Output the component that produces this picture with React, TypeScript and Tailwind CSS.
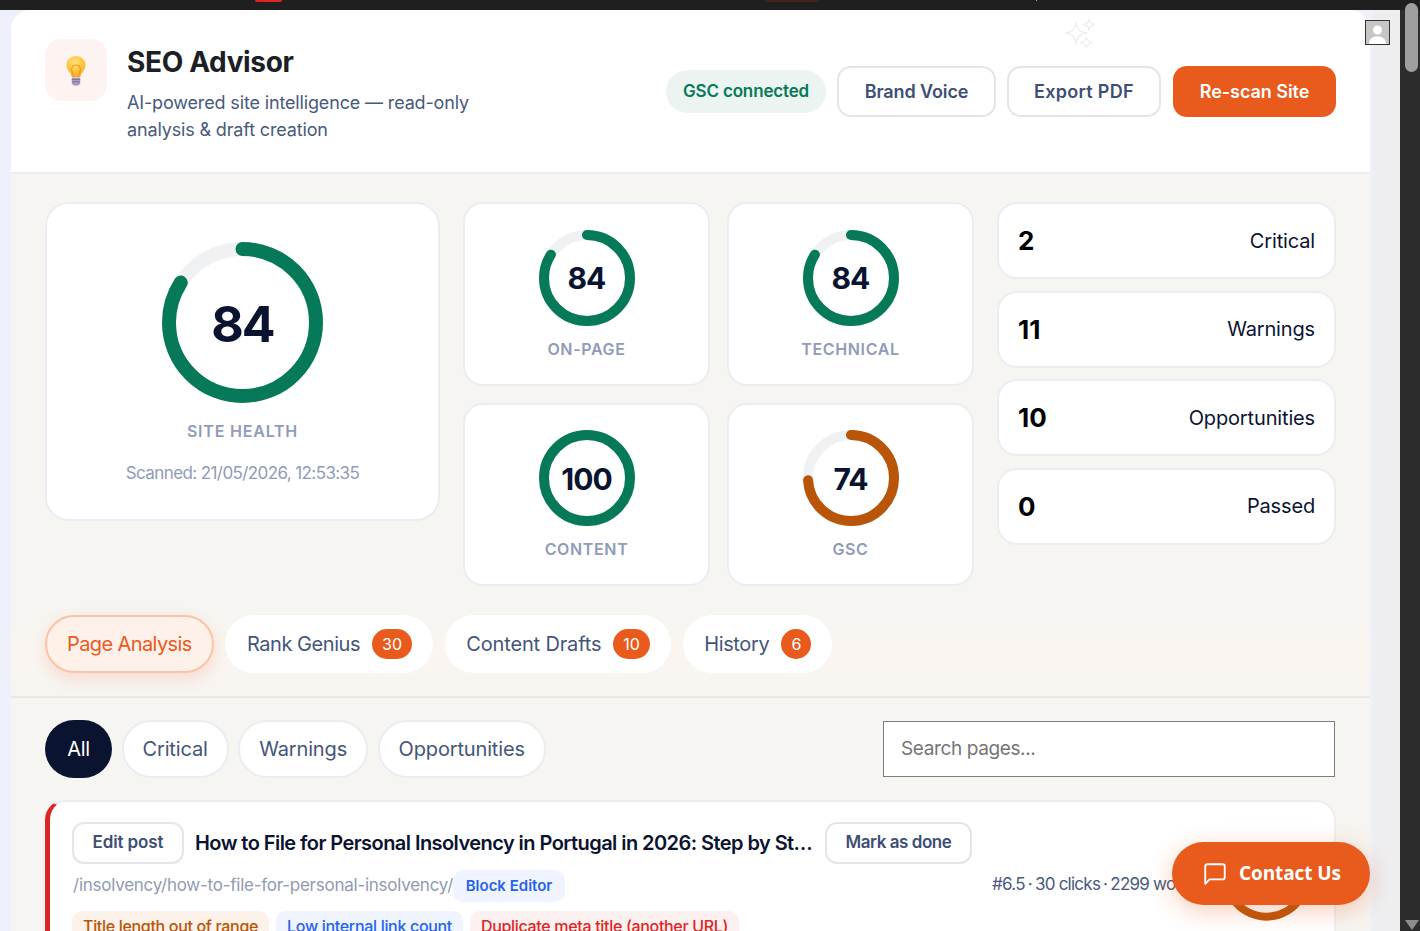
import React from 'react';

// Score ring, drawn from the top going clockwise
function Ring({ value, size, stroke, color }: { value: number; size: number; stroke: number; color: string }) {
    const r = (size - stroke) / 2;
    const c = 2 * Math.PI * r;
    return (
        <svg width={size} height={size} className="absolute inset-0 -rotate-90">
            <circle cx={size / 2} cy={size / 2} r={r} fill="none" stroke="#f0f1f3" strokeWidth={stroke} />
            <circle
                cx={size / 2}
                cy={size / 2}
                r={r}
                fill="none"
                stroke={color}
                strokeWidth={stroke}
                strokeLinecap={value < 100 ? 'round' : 'butt'}
                strokeDasharray={`${(c * value) / 100} ${c}`}
            />
        </svg>
    );
}

function ScoreCard({ value, label, pad, color = '#067a58' }: { value: number; label: string; pad: string; color?: string }) {
    return (
        <div className={`flex h-[183.5px] w-[247px] flex-col items-center rounded-[20px] border-2 border-[#ecedf1] bg-white ${pad}`}>
            <div className="relative flex h-[96px] w-[96px] items-center justify-center">
                <Ring value={value} size={96} stroke={10} color={color} />
                <span className="pt-[2px] text-[30px] font-bold tracking-[-1px] text-[#0a1330]">{value}</span>
            </div>
            <div className="mt-[13px] text-[16px] leading-[20px] font-semibold tracking-[0.65px] text-[#8f9bb8]">{label}</div>
        </div>
    );
}

function StatCard({ value, label }: { value: number; label: string }) {
    return (
        <div className="flex h-[77px] items-center justify-between rounded-[20px] border-2 border-[#ecedf1] bg-white pr-[19px] pl-[19px]">
            <span className="text-[26px] font-bold text-black">{value}</span>
            <span className="text-[20px] tracking-[-0.15px] text-[#0a1330]">{label}</span>
        </div>
    );
}

function Tab({ label, count, tracking }: { label: string; count: number; tracking: string }) {
    return (
        <div className="flex h-[58px] items-center gap-[12px] rounded-full bg-white pr-[21px] pl-[21.5px] text-[20px] text-[#44557a]">
            <span className={tracking}>{label}</span>
            <span className="flex h-[30px] min-w-[29px] items-center justify-center rounded-full bg-[#e95a1d] px-[10px] text-[16px] text-white">
                {count}
            </span>
        </div>
    );
}

function Filter({ label }: { label: string }) {
    return (
        <div className="flex h-[58px] items-center rounded-full border-2 border-[#ecedf1] bg-white px-[19px] text-[20px] tracking-[-0.15px] text-[#44557a]">
            {label}
        </div>
    );
}

function Issue({ label, className }: { label: string; className: string }) {
    return <span className={`flex h-[32px] items-center rounded-[10px] px-[11px] pb-[2px] text-[16px] font-medium tracking-[-0.32px] ${className}`}>{label}</span>;
}

export default function App() {
    return (
        <div className="relative flex h-[931px] w-[1420px] flex-col overflow-hidden bg-[#1f1f1f] font-['Inter',sans-serif]">
            {/* Browser strip above the page */}
            <div className="h-[10px] shrink-0 bg-[#1f1f1f]" />
            <div className="absolute top-0 left-[255px] h-[2px] w-[27px] rounded-b-full bg-[#e02424]" />
            <div className="absolute top-0 left-[765px] h-[2px] w-[54px] rounded-b-full bg-[#46241a]" />
            <div className="absolute top-0 left-[1036px] h-[1px] w-[1px] bg-[#c9a94f]" />

            <div className="flex min-h-0 flex-1">
                <div className="flex min-w-0 flex-1 bg-[#eef1fb]">
                    <main className="ml-[11px] w-[1359px] shrink-0 overflow-hidden rounded-t-[20px] bg-[#f6f5f1]">
                        {/* Header */}
                        <header className="flex h-[164px] items-start justify-between border-b-2 border-[#ecedf1] bg-white pr-[34px] pl-[34px]">
                            <div className="flex gap-[20px] pt-[29px]">
                                <div className="flex h-[62px] w-[62px] items-center justify-center rounded-[16px] bg-[#fdf3f0]">
                                    <svg width="22" height="32" viewBox="0 0 22 32" className="mt-[1px]">
                                        <defs>
                                            <radialGradient id="bulb" cx="0.45" cy="0.3" r="0.75">
                                                <stop offset="0" stopColor="#ffe27a" />
                                                <stop offset="0.6" stopColor="#fdc33a" />
                                                <stop offset="1" stopColor="#f5a524" />
                                            </radialGradient>
                                        </defs>
                                        <path d="M11 1C5.6 1 1.5 5 1.5 10c0 3.4 1.8 5.6 3.4 7.8 1 1.4 1.6 2.8 1.8 4.2h8.6c.2-1.4.8-2.8 1.8-4.2 1.6-2.2 3.4-4.4 3.4-7.8C20.500 5 16.400 1 11 1z" fill="url(#bulb)" />
                                        <path d="M8.500 21.500c-.4-3.500-1.800-4.500-1.800-7.200a4.300 4.300 0 0 1 8.600 0c0 2.700-1.400 3.700-1.800 7.200" fill="none" stroke="#eb9a25" strokeWidth="1.200" />
                                        <path d="M6.800 22.500h8.400v5.500c0 1.500-1.800 2.700-4.200 2.700s-4.200-1.200-4.200-2.700z" fill="#a99bc0" />
                                        <path d="M6.800 24.500h8.400M6.800 26.800h8.400" stroke="#7e6f99" strokeWidth="0.900" />
                                    </svg>
                                </div>
                                <div className="w-[350px]">
                                    <h1 className="pt-[3px] text-[28px] leading-[40px] font-bold tracking-[-0.35px] text-[#1a2026]">SEO Advisor</h1>
                                    <p className="mt-[7px] text-[18px] leading-[27px] tracking-[-0.15px] text-[#475a7d]">
                                        AI-powered site intelligence — read-only analysis &amp; draft creation
                                    </p>
                                </div>
                            </div>
                            <div className="flex items-center pt-[56px]">
                                <div className="flex h-[43px] w-[160px] items-center justify-center rounded-full bg-[#ebf4f1] text-[17px] font-semibold tracking-[-0.15px] text-[#067a58]">
                                    GSC connected
                                </div>
                                <div className="ml-[11px] flex h-[51px] w-[159px] items-center justify-center rounded-[14px] border-2 border-[#e4e5ea] bg-white text-[18px] font-semibold tracking-[-0.1px] text-[#3d4f75]">
                                    Brand Voice
                                </div>
                                <div className="ml-[11px] flex h-[51px] w-[154px] items-center justify-center rounded-[14px] border-2 border-[#e4e5ea] bg-white text-[18px] font-semibold tracking-[0.3px] text-[#3d4f75]">
                                    Export PDF
                                </div>
                                <div className="ml-[12px] flex h-[51px] w-[163px] items-center justify-center rounded-[14px] bg-[#e95a1d] text-[18px] font-semibold tracking-[-0.05px] text-white">
                                    Re-scan Site
                                </div>
                            </div>
                        </header>

                        {/* Scores */}
                        <section className="flex items-start px-[34px] pt-[28px]">
                            <div className="flex h-[319px] w-[395px] shrink-0 flex-col items-center rounded-[24px] border-2 border-[#ecedf1] bg-white pt-[38px]">
                                <div className="relative flex h-[161px] w-[161px] items-center justify-center">
                                    <Ring value={84} size={161} stroke={14} color="#067a58" />
                                    <span className="pt-[4px] text-[50px] font-bold tracking-[-2px] text-[#0a1330]">84</span>
                                </div>
                                <div className="mt-[17px] text-[16px] leading-[22px] font-semibold tracking-[0.8px] text-[#8f9bb8]">SITE HEALTH</div>
                                <div className="mt-[19px] text-[17px] leading-[24px] tracking-[-0.6px] text-[#8f9bb8]">Scanned: 21/05/2026, 12:53:35</div>
                            </div>
                            <div className="ml-[23px] grid shrink-0 grid-cols-[247px_247px] gap-[17px]">
                                <ScoreCard value={84} label="ON-PAGE" pad="pt-[25.5px]" />
                                <ScoreCard value={84} label="TECHNICAL" pad="pt-[25.5px]" />
                                <ScoreCard value={100} label="CONTENT" pad="pt-[25.5px]" />
                                <ScoreCard value={74} label="GSC" color="#b85508" pad="pt-[25.5px]" />
                            </div>
                            <div className="ml-[23px] flex w-[339px] shrink-0 flex-col gap-[11.67px]">
                                <StatCard value={2} label="Critical" />
                                <StatCard value={11} label="Warnings" />
                                <StatCard value={10} label="Opportunities" />
                                <StatCard value={0} label="Passed" />
                            </div>
                        </section>

                        {/* Tabs */}
                        <nav className="mt-[29px] flex h-[83px] gap-[11.7px] border-b-2 border-[#e9e7e2] bg-gradient-to-b from-[#f6f5f1] via-[#fbf5f0] to-[#f6f5f1] px-[34px]">
                            <div className="flex h-[58px] items-center rounded-full border-2 border-[#fdc3a4] bg-[#fdf1ea] px-[20px] text-[20px] tracking-[-0.6px] text-[#e95a1d] shadow-[0_6px_16px_rgba(233,90,29,0.16)]">
                                Page Analysis
                            </div>
                            <Tab label="Rank Genius" count={30} tracking="tracking-[-0.45px]" />
                            <Tab label="Content Drafts" count={10} tracking="tracking-[-0.15px]" />
                            <Tab label="History" count={6} tracking="tracking-[-0.35px]" />
                        </nav>

                        {/* Filters */}
                        <div className="flex items-center justify-between pt-[22px] pr-[35px] pl-[34px]">
                            <div className="flex gap-[9.5px]">
                                <div className="flex h-[58px] w-[67px] items-center justify-center rounded-full bg-[#0a1330] text-[20px] tracking-[-0.4px] text-white">All</div>
                                <Filter label="Critical" />
                                <Filter label="Warnings" />
                                <Filter label="Opportunities" />
                            </div>
                            <div className="flex h-[56px] w-[452px] items-center border border-[#7d7d7d] bg-white px-[17px] pt-[1px] text-[19px] tracking-[-0.38px] text-[#757575]">
                                Search pages...
                            </div>
                        </div>

                        {/* First page result */}
                        <article className="relative mx-[34px] mt-[22px] h-[200px] overflow-hidden rounded-[20px] border-t-2 border-r-2 border-l-[5px] border-[#ecedf1] border-l-[#dc2626] bg-white pt-[20px] pl-[22px]">
                            <div className="flex items-center">
                                <div className="flex h-[42px] w-[112px] items-center justify-center rounded-[12px] border-2 border-[#e4e5ea] text-[17px] font-semibold tracking-[-0.1px] text-[#3d4f75]">Edit post</div>
                                <div className="ml-[11px] w-[619px] truncate text-[20px] font-semibold tracking-[-0.56px] text-[#0a1330]">
                                    How to File for Personal Insolvency in Portugal in 2026: Step by Step Guide
                                </div>
                                <div className="ml-[11px] flex h-[42px] w-[147px] items-center justify-center rounded-[12px] border-2 border-[#e4e5ea] text-[17px] font-semibold tracking-[-0.45px] text-[#3d4f75]">Mark as done</div>
                            </div>
                            <div className="mt-[6px] flex items-center">
                                <span className="w-[381px] pl-[1px] text-[17px] tracking-[-0.25px] whitespace-nowrap text-[#8f9bb0]">/insolvency/how-to-file-for-personal-insolvency/</span>
                                <span className="flex h-[32px] w-[112px] items-center justify-center rounded-[10px] bg-[#f0f4fe] text-[15px] font-semibold tracking-[0px] text-[#2563eb]">Block Editor</span>
                                <span className="ml-[427px] flex gap-[3px] pb-[3px] text-[17px] tracking-[-0.75px] whitespace-nowrap text-[#475a7d]">
                                    <span>#6.5</span>
                                    <span>·</span>
                                    <span>30 clicks</span>
                                    <span>·</span>
                                    <span>2299 words</span>
                                </span>
                            </div>
                            <div className="mt-[9px] flex gap-[7px]">
                                <Issue label="Title length out of range" className="bg-[#fdf2ea] text-[#b85508]" />
                                <Issue label="Low internal link count" className="bg-[#f0f4fe] text-[#2563eb]" />
                                <Issue label="Duplicate meta title (another URL)" className="bg-[#fdf0f0] text-[#dc2626]" />
                            </div>
                        </article>
                    </main>
                </div>
                <div className="w-[27px] shrink-0 bg-[#eeeef0]" />
                {/* Window scrollbar */}
                <div className="flex w-[20px] shrink-0 flex-col bg-[#2c2c2c]" />
            </div>

            {/* Window scrollbar thumb and arrow */}
            <div className="absolute top-[3px] left-[1405px] h-[69px] w-[13px] rounded-full bg-[#9f9f9f]" />
            <svg width="14" height="10" viewBox="0 0 14 10" className="absolute top-[920px] left-[1405px]">
                <path d="M0 0h14L7 10z" fill="#8e8e8e" />
            </svg>

            {/* Faint sparkles in the header */}
            <svg width="34" height="34" viewBox="0 0 34 34" className="absolute top-[17px] left-[1064px]" fill="none" stroke="#eceef0" strokeWidth="1.300">
                <path d="M12 5c1 7 3 10 11 11-8 1-10 4-11 11-1-7-3-10-11-11 8-1 10-4 11-11z" />
                <path d="M25 1.500c.6 4 1.800 5.400 6 6-4.200.6-5.400 2-6 6-.6-4-1.800-5.400-6-6 4.200-.6 5.400-2 6-6z" />
                <path d="M22.500 20c.6 3.500 1.800 4.900 6 5.500-4.200.6-5.400 2-6 5.500-.6-3.500-1.800-4.900-6-5.500 4.200-.6 5.400-2 6-5.500z" />
            </svg>

            {/* Profile picture placeholder */}
            <div className="absolute top-[20px] left-[1365px] h-[25px] w-[25px] overflow-hidden border border-[#333] bg-[#c6c6c6]">
                <svg width="23" height="23" viewBox="0 0 23 23">
                    <circle cx="11.500" cy="9" r="4.500" fill="#fff" />
                    <path d="M3 23c0-4.500 2.500-6.500 6-7.500h5c3.500 1 6 3 6 7.500z" fill="#fff" />
                </svg>
            </div>

            {/* Arc peeking out below the contact button */}
            <svg width="85" height="34" viewBox="0 0 85 34" className="absolute top-[890px] left-[1224px]" fill="none">
                <path d="M9.300 9A40 40 0 0 0 75.700 9" stroke="#b85508" strokeWidth="8" />
            </svg>

            {/* Contact button */}
            <div className="absolute top-[842px] left-[1172px] flex h-[63px] w-[198px] items-center gap-[11px] rounded-full bg-[#e95a1d] pl-[30px] font-['Open_Sans',sans-serif] text-[19px] font-bold tracking-[-0.1px] text-white shadow-[0_6px_24px_rgba(233,90,29,0.3)]">
                <svg width="26" height="26" viewBox="0 0 24 24" fill="none" stroke="currentColor" strokeWidth="1.700" strokeLinejoin="round">
                    <path d="M21 15a2 2 0 0 1-2 2H7l-4 4V5a2 2 0 0 1 2-2h14a2 2 0 0 1 2 2z" />
                </svg>
                Contact Us
            </div>
        </div>
    );
}
